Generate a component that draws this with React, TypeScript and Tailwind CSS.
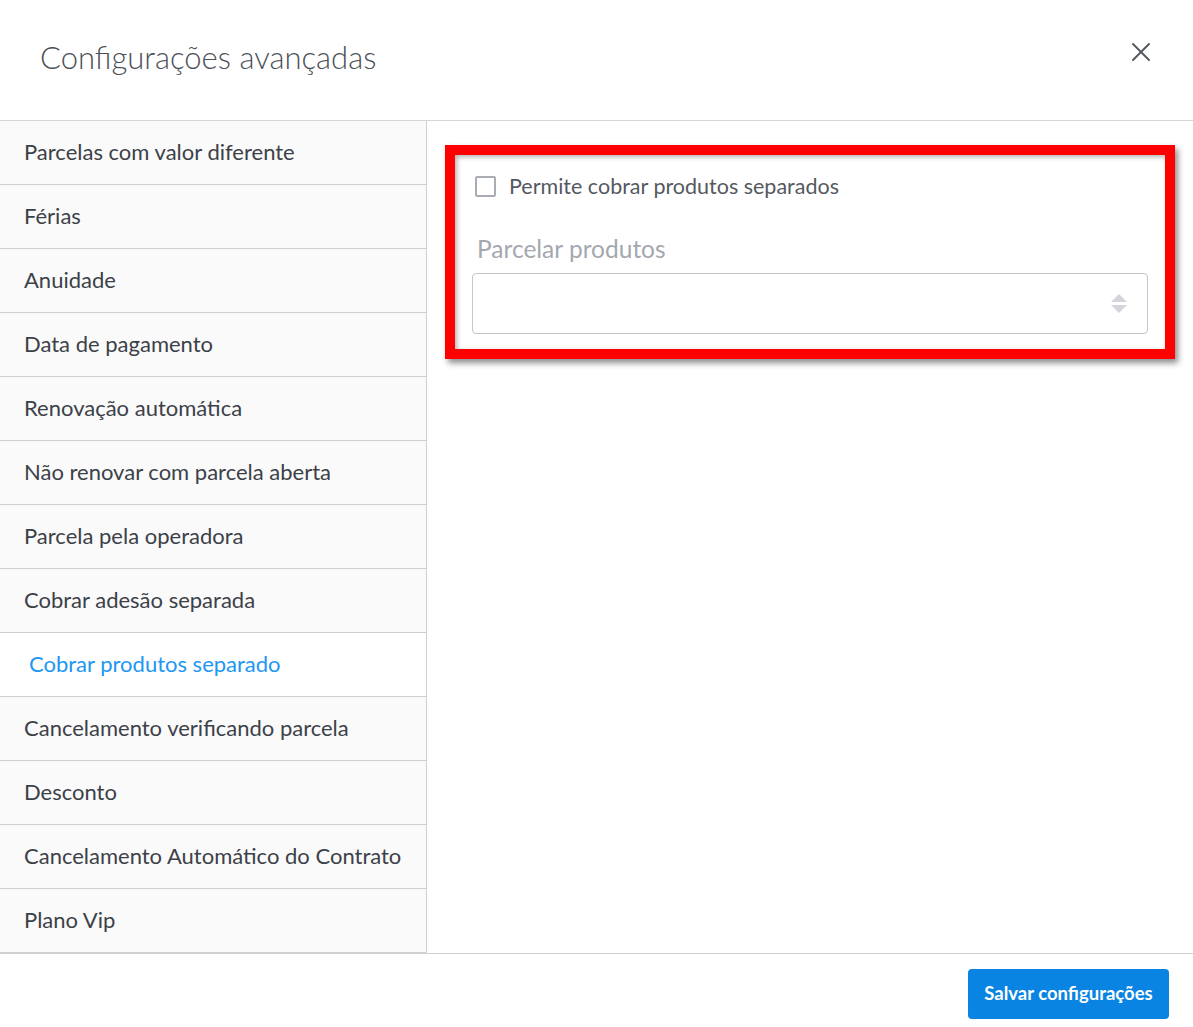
import { X } from "lucide-react";

const items = [
  "Parcelas com valor diferente",
  "Férias",
  "Anuidade",
  "Data de pagamento",
  "Renovação automática",
  "Não renovar com parcela aberta",
  "Parcela pela operadora",
  "Cobrar adesão separada",
  "Cobrar produtos separado",
  "Cancelamento verificando parcela",
  "Desconto",
  "Cancelamento Automático do Contrato",
  "Plano Vip",
];

const ACTIVE = "Cobrar produtos separado";

function SortIcon() {
  return (
    <svg width="16" height="22" viewBox="0 0 16 22" className="text-[#d3d5db]">
      <path d="M8 1 L16 9 H0 Z" fill="currentColor" />
      <path d="M0 12 H16 L8 20 Z" fill="currentColor" />
    </svg>
  );
}

export default function App() {
  return (
    <div
      className="w-[1193px] h-[1027px] bg-white flex flex-col text-[#3c4148]"
      style={{ fontFamily: "Lato, 'Noto Sans', sans-serif" }}
    >
      <header className="h-[121px] shrink-0 flex items-center justify-between pl-10 pr-9 border-b border-[#d6d6d6]">
        <h1 className="text-[31px] font-light text-[#4b5057] -mt-[6px]">
          Configurações avançadas
        </h1>
        <button type="button" className="text-[#55595f] -mt-[16px]">
          <X className="w-8 h-8" strokeWidth={1.5} />
        </button>
      </header>

      <div className="flex h-[832px] shrink-0">
        <nav className="w-[427px] shrink-0 border-r border-[#cfcfcf] flex flex-col">
          {items.map((item) => {
            const isActive = item === ACTIVE;
            return (
              <div
                key={item}
                className={
                  isActive
                    ? "h-16 shrink-0 flex items-center pl-[29px] pb-[3px] bg-white text-[#2196f3] text-[22px] border-b border-[#cfcfcf]"
                    : "h-16 shrink-0 flex items-center pl-6 pb-[3px] bg-[#fafafa] text-[#3c4148] text-[22px] border-b border-[#cfcfcf]"
                }
              >
                {item}
              </div>
            );
          })}
        </nav>

        <section className="flex-1 pl-[18px] pr-[18px] pt-6">
          <div className="border-[10px] border-[#ff0000] shadow-[3px_4px_6px_rgba(0,0,0,0.45)]">
            <div className="shadow-[inset_2px_2px_5px_rgba(0,0,0,0.3)] pt-[17px] pb-[15px] pl-[17px] pr-[17px]">
              <label className="flex items-center gap-[13px] pl-[3px]">
                <span className="w-[21px] h-[21px] border-2 border-[#a9adb3] rounded-[2px] bg-white" />
                <span className="text-[21.5px] text-[#55595f] leading-[28px]">
                  Permite cobrar produtos separados
                </span>
              </label>
              <div className="mt-[34px] pl-[5px] text-[24.5px] text-[#a4a8ae] leading-[30px]">
                Parcelar produtos
              </div>
              <div className="mt-[9px] h-[61px] border border-[#c4c6ce] rounded-[4px] flex items-center justify-end pr-5">
                <SortIcon />
              </div>
            </div>
          </div>
        </section>
      </div>

      <footer className="flex-1 border-t border-[#d0d0d0] flex items-start justify-end pr-6 pt-[15px]">
        <button
          type="button"
          className="h-[50px] w-[201px] rounded-[4px] bg-[#0a84e3] text-white text-[18.5px] font-bold"
        >
          Salvar configurações
        </button>
      </footer>
    </div>
  );
}
